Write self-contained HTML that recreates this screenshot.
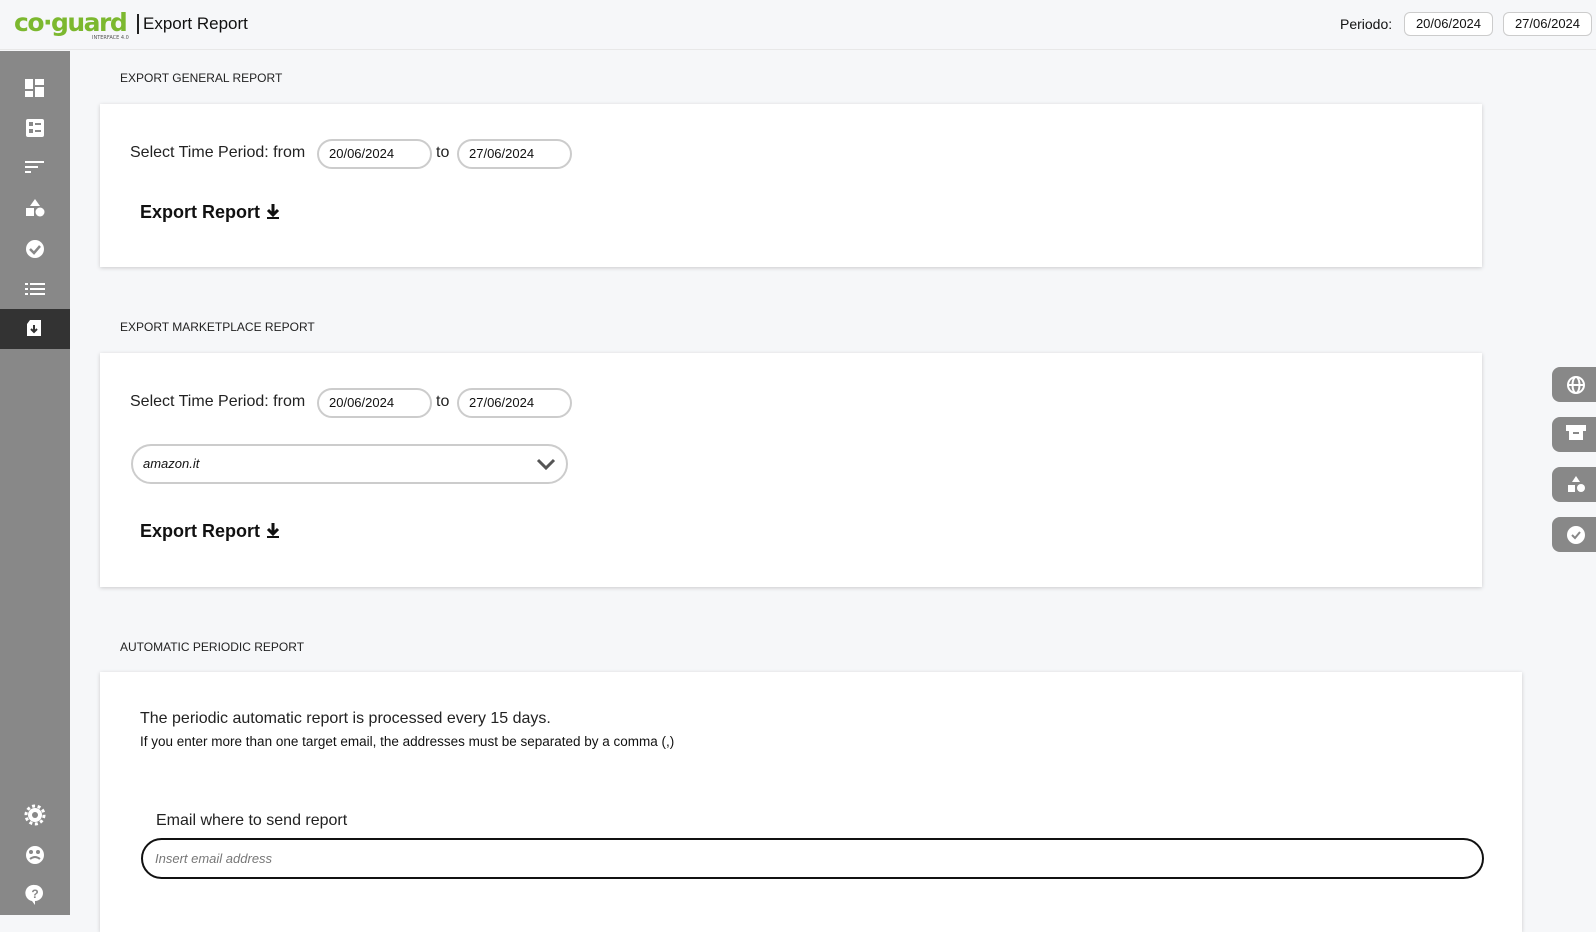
<!DOCTYPE html>
<html><head><meta charset="utf-8"><style>
*{box-sizing:border-box;margin:0;padding:0}
body{width:1596px;height:915px;overflow:hidden;background:#f6f7f9;font-family:"Liberation Sans",sans-serif;color:#111;position:relative}
.hdr{position:absolute;left:0;top:0;width:1596px;height:50px;background:#f6f7f9;border-bottom:1px solid #e8e8e8}
.logo{position:absolute;left:14px;top:8px;font-size:25px;color:#7cb82f;letter-spacing:-1.5px;font-weight:bold;font-family:"DejaVu Sans",sans-serif}
.logo small{position:absolute;left:78px;top:27px;font-size:5px;color:#555;letter-spacing:0;font-weight:normal;white-space:nowrap}
.title{position:absolute;left:137px;top:14px;font-size:17px;border-left:2px solid #222;padding-left:4px;line-height:20px}
.per{position:absolute;left:1340px;top:16px;font-size:14px}
.db{position:absolute;top:12px;height:24px;width:89px;border:1px solid #ccc;border-radius:6px;background:#fff;font-size:13px;text-align:center;line-height:22px}
.side{position:absolute;left:0;top:51px;width:70px;height:864px;background:#888}
.act{position:absolute;left:0;top:258px;width:70px;height:40px;background:#333}
.h{position:absolute;left:120px;font-size:12px;color:#222}
.card{position:absolute;left:100px;background:#fff;box-shadow:0 1px 4px rgba(0,0,0,.18)}
.lbl{position:absolute;font-size:16px;color:#222}
.in{position:absolute;height:30px;width:115px;border:2px solid #ccc;border-radius:15px;font-size:13px;padding-left:10px;line-height:26px}
.exp{position:absolute;font-size:18px;font-weight:bold}
.exp svg{vertical-align:-2px;margin-left:6px}
.rb{position:absolute;left:1552px;width:60px;height:35px;background:#888;border-radius:8px}
</style></head><body>
<div class="hdr">
<div class="logo">co·guard<small>INTERFACE 4.0</small></div>
<div class="title">Export Report</div>
<div class="per">Periodo:</div>
<div class="db" style="left:1404px">20/06/2024</div>
<div class="db" style="left:1503px">27/06/2024</div>
</div>
<div class="side">
<div class="act"></div>
</div>
<svg style="position:absolute;left:0;top:0" width="70" height="915" fill="#fff">
<rect x="25" y="79" width="8" height="10"/><rect x="35" y="79" width="9" height="6"/><rect x="25" y="91" width="8" height="6"/><rect x="35" y="87" width="9" height="10"/>
<rect x="26" y="119" width="18" height="18" rx="2"/><rect x="29" y="122" width="4" height="4" fill="#888"/><rect x="29" y="129" width="4" height="4" fill="#888"/><rect x="35" y="123" width="6" height="2" fill="#888"/><rect x="35" y="130" width="6" height="2" fill="#888"/>
<rect x="25" y="161" width="19" height="2"/><rect x="25" y="166" width="13" height="2"/><rect x="25" y="171" width="6" height="2"/>
<polygon points="35,199 40,206 30,206"/><rect x="26" y="208" width="8" height="8"/><circle cx="40" cy="212" r="4.5"/>
<circle cx="35" cy="249" r="9"/><path d="M30 249l4 4 6-7" stroke="#888" stroke-width="2.5" fill="none"/>
<rect x="25" y="283" width="3" height="2"/><rect x="30" y="283" width="15" height="2"/><rect x="25" y="288" width="3" height="2"/><rect x="30" y="288" width="15" height="2"/><rect x="25" y="293" width="3" height="2"/><rect x="30" y="293" width="15" height="2"/>
<path d="M30 320h11v16h-14v-12z"/><path d="M34 325v6M31 329l3 3 3-3" stroke="#333" stroke-width="2" fill="none"/>
<circle cx="35" cy="815" r="7"/><circle cx="35" cy="815" r="9" fill="none" stroke="#fff" stroke-width="3" stroke-dasharray="3 2.6"/><circle cx="35" cy="815" r="3" fill="#888"/>
<circle cx="35" cy="855" r="9"/><circle cx="31" cy="852" r="2" fill="#888"/><circle cx="38" cy="852" r="2" fill="#888"/><path d="M30 859q5 -4 10 0" stroke="#888" stroke-width="2" fill="none"/>
<path d="M35 885a8 8 0 1 1 0 16l0 4-3-4a8 8 0 0 1 3-16z"/><text x="35" y="898" font-size="12" font-weight="bold" fill="#888" text-anchor="middle" font-family="Liberation Sans">?</text>
</svg>

<div class="h" style="top:71px">EXPORT GENERAL REPORT</div>
<div class="card" style="top:104px;width:1382px;height:163px">
<div class="lbl" style="left:30px;top:40px">Select Time Period: from</div>
<div class="in" style="left:217px;top:35px">20/06/2024</div>
<div class="lbl" style="left:336px;top:40px">to</div>
<div class="in" style="left:357px;top:35px">27/06/2024</div>
<div class="exp" style="left:40px;top:98px">Export Report<svg width="14" height="17"><path d="M7 1v10M2 7l5 5 5-5" stroke="#111" stroke-width="3" fill="none"/><rect x="1" y="14" width="12" height="2" fill="#111"/></svg></div>
</div>

<div class="h" style="top:320px">EXPORT MARKETPLACE REPORT</div>
<div class="card" style="top:353px;width:1382px;height:234px">
<div class="lbl" style="left:30px;top:40px">Select Time Period: from</div>
<div class="in" style="left:217px;top:35px">20/06/2024</div>
<div class="lbl" style="left:336px;top:40px">to</div>
<div class="in" style="left:357px;top:35px">27/06/2024</div>
<div class="in" style="left:31px;top:91px;width:437px;height:40px;border-radius:20px;line-height:36px;font-style:italic;font-size:13px">amazon.it
<svg style="position:absolute;right:10px;top:12px" width="20" height="12"><path d="M2 2l8 8 8-8" stroke="#555" stroke-width="3" fill="none"/></svg></div>
<div class="exp" style="left:40px;top:168px">Export Report<svg width="14" height="17"><path d="M7 1v10M2 7l5 5 5-5" stroke="#111" stroke-width="3" fill="none"/><rect x="1" y="14" width="12" height="2" fill="#111"/></svg></div>
</div>

<div class="h" style="top:640px">AUTOMATIC PERIODIC REPORT</div>
<div class="card" style="top:672px;width:1422px;height:260px">
<div class="lbl" style="left:40px;top:38px">The periodic automatic report is processed every 15 days.</div>
<div style="position:absolute;left:40px;top:62px;font-size:13.5px">If you enter more than one target email, the addresses must be separated by a comma (,)</div>
<div class="lbl" style="left:56px;top:140px">Email where to send report</div>
<div style="position:absolute;left:41px;top:166px;width:1343px;height:41px;border:2px solid #111;border-radius:21px;font-size:13px;font-style:italic;color:#777;padding-left:12px;line-height:37px">Insert email address</div>
</div>

<div class="rb" style="top:367px"></div><div class="rb" style="top:417px"></div><div class="rb" style="top:467px"></div><div class="rb" style="top:517px"></div>
<svg style="position:absolute;left:1552px;top:0" width="44" height="915" fill="none" stroke="#fff" stroke-width="2">
<circle cx="24" cy="385" r="8"/><ellipse cx="24" cy="385" rx="3.5" ry="8"/><path d="M16 385h16"/>
<rect x="15" y="426" width="18" height="4" fill="#fff"/><rect x="17" y="430" width="14" height="10" fill="#fff" stroke="none"/><path d="M21 433h6" stroke="#888"/>
<polygon points="24,476 28,482 20,482" fill="#fff" stroke="none"/><rect x="16" y="485" width="7" height="7" fill="#fff" stroke="none"/><circle cx="29" cy="488" r="4" fill="#fff" stroke="none"/>
<circle cx="24" cy="535" r="9" fill="#fff" stroke="none"/><path d="M20 535l3 3 5-6" stroke="#888"/>
</svg>
</body></html>
